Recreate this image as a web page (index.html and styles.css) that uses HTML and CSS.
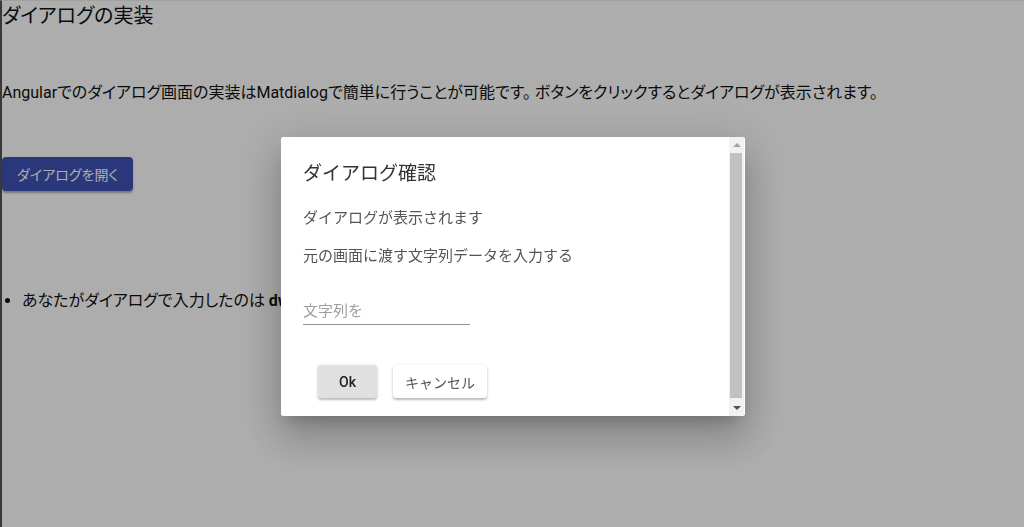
FILE: index.html
```html
<!DOCTYPE html>
<html lang="ja">
<head>
    <meta charset="UTF-8">
    <title>ダイアログの実装</title>
    <link rel="stylesheet" href="styles.css">
</head>
<body>

<div class="page">
    <h2 class="page_title">ダイアログの実装</h2>

    <p class="page_text">Angularでのダイアログ画面の実装はMatdialogで簡単に行うことが可能です。 ボタンをクリックするとダイアログが表示されます。</p>

    <button class="btn_open">ダイアログを開く</button>

    <ul class="result_list">
        <li>あなたがダイアログで入力したのは <b>dwdwdw</b></li>
    </ul>
</div>

<!--ダイアログ-->
<div class="overlay">
    <div class="dialog">
        <div class="dialog_inner">
            <h1 class="dialog_title">ダイアログ確認</h1>
            <div class="dialog_content">
                <p>ダイアログが表示されます</p>
                <p>元の画面に渡す文字列データを入力する</p>
                <div class="field">
                    <input type="text" class="field_input" placeholder="文字列を">
                </div>
            </div>
            <div class="dialog_actions">
                <button class="btn_ok">Ok</button>
                <button class="btn_cancel">キャンセル</button>
            </div>
        </div>
        <!--スクロールバー-->
        <div class="scrollbar">
            <div class="scroll_arrow arrow_up"></div>
            <div class="scroll_thumb"></div>
            <div class="scroll_arrow arrow_down"></div>
        </div>
    </div>
</div>

</body>
</html>
```

FILE: styles.css
```css
* {
    margin: 0px;
    padding: 0px;
    box-sizing: border-box;
}

body {
    font-family: Roboto, "Noto Sans CJK JP", sans-serif;
    background-color: white;
    color: #111;
    height: 527px;
    overflow: hidden;
    border-left: 2px solid #555;
    border-top: 1px solid #eee;
}

.page {
    font-feature-settings: "palt";
}

.page_title {
    font-size: 20px;
    font-weight: normal;
    line-height: 28px;
    margin-top: 1px;
}

.page_text {
    font-size: 16px;
    line-height: 24px;
    margin-top: 51px;
}

.btn_open {
    margin-top: 52px;
    height: 34px;
    padding: 0 15px;
    font-family: inherit;
    font-feature-settings: "palt";
    font-size: 14px;
    color: white;
    background-color: #3f51b5;
    border: none;
    border-radius: 4px;
    box-shadow: 0 2px 2px rgba(0, 0, 0, 0.3);
}

.result_list {
    margin-top: 98px;
    padding-left: 20px;
    font-size: 16px;
    line-height: 24px;
}

/*背景を暗くする*/
.overlay {
    position: fixed;
    left: 0;
    top: 0;
    width: 100%;
    height: 100%;
    background-color: rgba(0, 0, 0, 0.32);
}

.dialog {
    position: absolute;
    left: 281px;
    top: 137px;
    width: 464px;
    height: 279px;
    display: flex;
    background-color: white;
    border-radius: 2px;
    box-shadow: 0 11px 15px -7px rgba(0, 0, 0, 0.2), 0 24px 38px 3px rgba(0, 0, 0, 0.14), 0 9px 46px 8px rgba(0, 0, 0, 0.12);
    overflow: hidden;
}

.dialog_inner {
    flex: 1;
    padding: 22px 24px 0 22px;
}

.dialog_title {
    font-size: 19px;
    font-weight: normal;
    line-height: 30px;
    color: #333;
}

.dialog_content {
    margin-top: 17px;
    color: #555;
    font-size: 15px;
}

.dialog_content p {
    line-height: 24px;
    margin-bottom: 14px;
}

.field {
    margin-top: 30px;
    width: 167px;
    border-bottom: 1px solid #949494;
}

.field_input {
    width: 100%;
    height: 26px;
    border: none;
    outline: none;
    font-family: inherit;
    font-size: 15px;
    color: #555;
}

.field_input::placeholder {
    color: #9e9e9e;
}

.dialog_actions {
    display: flex;
    gap: 16px;
    margin-top: 40px;
    padding-left: 15px;
}

.btn_ok, .btn_cancel {
    height: 33px;
    font-family: inherit;
    font-size: 14px;
    border: none;
    border-radius: 3px;
    box-shadow: 0 2px 2px rgba(0, 0, 0, 0.2), 0 1px 4px rgba(0, 0, 0, 0.12);
}

.btn_ok {
    width: 59px;
    background-color: #e0e0e0;
    color: #222;
    font-weight: 500;
}

.btn_cancel {
    width: 94px;
    background-color: white;
    color: #555;
}

/*スクロールバー*/
.scrollbar {
    width: 15px;
    margin-right: 1px;
    display: flex;
    flex-direction: column;
    background-color: #f1f1f1;
}

.scroll_arrow {
    height: 16px;
    display: flex;
    align-items: center;
    justify-content: center;
}

.arrow_up::before, .arrow_down::before {
    content: "";
    border-left: 4px solid transparent;
    border-right: 4px solid transparent;
}

.arrow_up::before {
    border-bottom: 4px solid #a3a3a3;
}

.arrow_down::before {
    border-top: 4px solid #505050;
}

.scroll_thumb {
    flex: 1;
    margin: 0 2px 2px 1px;
    background-color: #c1c1c1;
}
```
